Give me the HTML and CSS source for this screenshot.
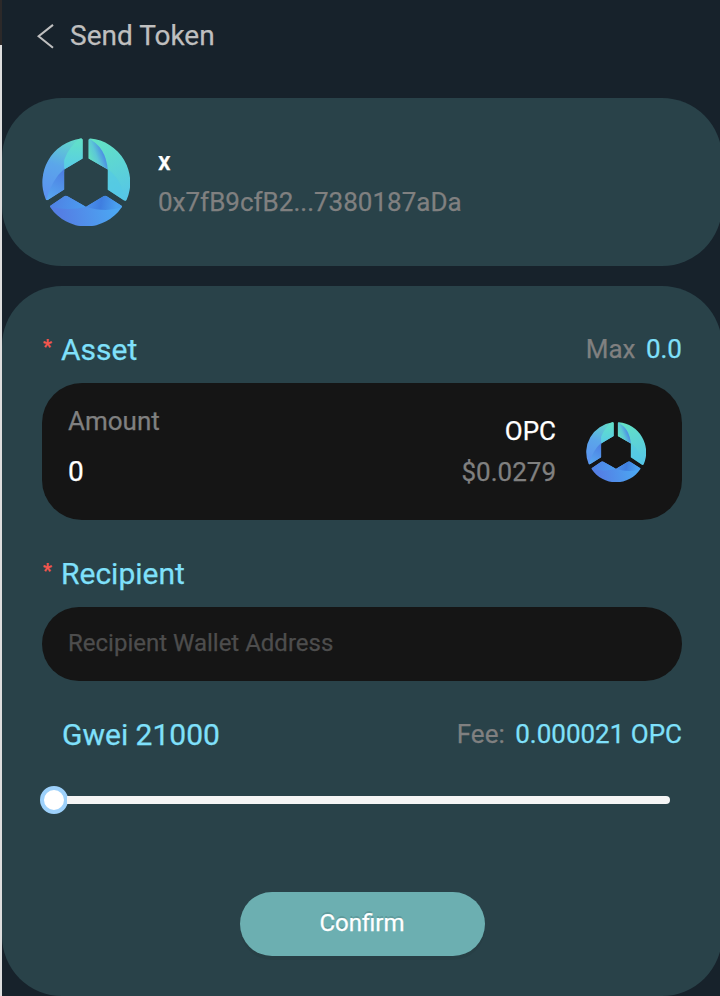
FILE: index.html
```html
<!DOCTYPE html>
<html lang="en">
<head>
<meta charset="utf-8">
<title>Send Token</title>
<link rel="stylesheet" href="styles.css">
</head>
<body>
<svg width="0" height="0" class="defs" aria-hidden="true">
  <defs>
    <linearGradient id="gl" gradientUnits="userSpaceOnUse" x1="34" y1="0" x2="12" y2="60"><stop offset="0" stop-color="#62dcc8"/><stop offset=".5" stop-color="#5ba6ea"/><stop offset="1" stop-color="#5b93f0"/></linearGradient>
    <linearGradient id="gl2" gradientUnits="userSpaceOnUse" x1="30" y1="4" x2="28" y2="36"><stop offset="0" stop-color="#61dfca"/><stop offset="1" stop-color="#56c8ec"/></linearGradient>
    <linearGradient id="gl3" gradientUnits="userSpaceOnUse" x1="22" y1="34" x2="8" y2="60"><stop offset="0" stop-color="#4d7fe2"/><stop offset="1" stop-color="#57a6f0"/></linearGradient>
    <linearGradient id="gr" gradientUnits="userSpaceOnUse" x1="56" y1="0" x2="80" y2="60"><stop offset="0" stop-color="#63e2c4"/><stop offset="1" stop-color="#56c6e6"/></linearGradient>
    <linearGradient id="gr2" gradientUnits="userSpaceOnUse" x1="46" y1="20" x2="62" y2="14"><stop offset="0" stop-color="#64e3c0"/><stop offset=".5" stop-color="#5cc8d6"/><stop offset="1" stop-color="#4a86e6"/></linearGradient>
    <linearGradient id="gb" gradientUnits="userSpaceOnUse" x1="20" y1="78" x2="72" y2="68"><stop offset="0" stop-color="#547fe4"/><stop offset="1" stop-color="#4ca6f2"/></linearGradient>
    <linearGradient id="gb2" gradientUnits="userSpaceOnUse" x1="46" y1="66" x2="74" y2="70"><stop offset="0" stop-color="#4a8eea"/><stop offset=".45" stop-color="#3f7ee0"/><stop offset="1" stop-color="#4aa0ee"/></linearGradient>
    <linearGradient id="gb3" gradientUnits="userSpaceOnUse" x1="12" y1="64" x2="44" y2="70"><stop offset="0" stop-color="#4f83e4"/><stop offset="1" stop-color="#4b9df0"/></linearGradient>
    <clipPath id="cl"><path d="M39 .5Q40.700 .3 40.700 2V20.300L22.300 31.300V51.300L6 61.700Q4.700 62.500 4 61A44 44 0 0 1 39 .5Z"/></clipPath>
    <clipPath id="cr"><path d="M46.700 2Q46.700 .3 48.400 .4A44 44 0 0 1 84.500 61.500Q83.600 63.200 82 62.200L65.700 51.500V31.300L46.700 20.300Z"/></clipPath>
    <clipPath id="cb"><path d="M8.700 69Q7.700 67.900 9 67L22.500 58Q24 57 25.600 58L44 68.300L61.500 58Q63 57 64.600 58L79 67Q80.400 67.900 79.400 69A42.500 42.500 0 0 1 8.700 69Z"/></clipPath>
    <symbol id="logo" viewBox="0.300 0 87.500 87.500">
      <g clip-path="url(#cl)"><path fill="url(#gl)" d="M-2 0H42V70H-2Z"/><path fill="url(#gl2)" d="M42 0H38Q27 9 22.300 22V34L42 22Z"/><path fill="url(#gl3)" d="M23 30Q9 42 4 64L24 54Z"/></g>
      <g clip-path="url(#cr)"><path fill="url(#gr)" d="M46 0H88V66H46Z"/><path fill="url(#gr2)" d="M46 0Q64 9 65.700 32L46 21Z"/><path fill="#54c8e6" opacity=".6" d="M65.700 31Q81 42 82 64L65 53Z"/></g>
      <g clip-path="url(#cb)"><path fill="url(#gb)" d="M4 54H84V88H4Z"/><path fill="url(#gb3)" d="M8 67L24 55L44 68.300Q26 73 8 68Z"/><path fill="url(#gb2)" d="M44 68.300L63 55L82 68Q65 75 44 68.300Z"/></g>
    </symbol>
  </defs>
</svg>
<main class="screen">
  <header class="topbar">
    <svg class="back" viewBox="0 0 16 24"><path d="M15.200 .8L1.400 11.800L15.200 22.800"/></svg>
    <h1>Send Token</h1>
  </header>
  <section class="card account">
    <svg class="avatar"><use href="#logo"/></svg>
    <div class="identity">
      <div class="name">x</div>
      <div class="address">0x7fB9cfB2...7380187aDa</div>
    </div>
  </section>
  <section class="card form">
    <div class="row">
      <div class="label"><span class="star">*</span>Asset</div>
      <div class="side">Max <b>0.0</b></div>
    </div>
    <div class="asset">
      <div class="amount"><span class="hint">Amount</span><span class="value">0</span></div>
      <div class="price"><span>OPC</span><span class="usd">$0.0279</span></div>
      <svg class="coin"><use href="#logo"/></svg>
    </div>
    <div class="row recipient-row">
      <div class="label"><span class="star">*</span>Recipient</div>
    </div>
    <div class="recipient">Recipient Wallet Address</div>
    <div class="row gas-row">
      <div class="label gas">Gwei 21000</div>
      <div class="side">Fee: <b>0.000021 OPC</b></div>
    </div>
    <div class="slider"><div class="handle"></div><div class="rail"></div></div>
    <button class="confirm">Confirm</button>
  </section>
</main>
</body>
</html>
```
FILE: styles.css
```css
* { box-sizing: border-box; }
body {
  margin: 0;
  height: 996px;
  overflow: hidden;
  background: linear-gradient(#2c2929 0 45px, #dedede 45px) 0 0 / 2px 100% no-repeat, #17222b;
  font-family: Roboto, sans-serif;
  font-size: 26px;
  color: #fff;
  -webkit-text-stroke: .25px currentColor;
}
.defs { display: block; height: 0; }
.screen { margin-left: 2px; width: 720px; }
.topbar { height: 98px; padding: 16px 0 0 35px; display: flex; align-items: flex-start; color: #bfbfbf; }
.back { width: 17px; height: 25px; margin: 8px 16px 0 0; fill: none; stroke: #bfbfbf; stroke-width: 2; }
h1 { margin: 0; font-size: 28px; font-weight: 400; line-height: 40px; }
.card { background: #294249; border-radius: 60px; }
.account { height: 168px; padding: 40px; display: flex; }
.avatar { width: 88px; height: 88px; margin-right: 28px; }
.identity { padding-top: 4px; line-height: 40px; }
.name { font-weight: 500; font-size: 25px; }
.address { color: #808080; }
.form { margin-top: 20px; height: 710px; padding: 44px 40px 0; }
.row { display: flex; justify-content: space-between; height: 40px; line-height: 40px; }
.label { display: flex; color: #7fe0fb; font-size: 30px; }
.label.gas { padding-left: 20px; }
.star { width: 19px; padding-left: 1px; color: #f5564e; font-size: 20px; font-weight: 500; line-height: 34px; }
.side { color: #808080; line-height: 38px; }
.side b { margin-left: 4px; font-weight: 400; color: #7fe0fb; }
.asset { height: 137px; margin-top: 13px; padding: 0 36px 0 26px; border-radius: 40px; background: #151515; display: flex; align-items: center; }
.amount { flex: 1; display: flex; flex-direction: column; line-height: 50px; margin-top: -11px; }
.hint, .usd { color: #808080; }
.value { font-size: 28px; height: 50px; line-height: 52px; }
.price { display: flex; flex-direction: column; align-items: flex-end; line-height: 41px; margin-right: 30px; }
.coin { width: 60px; height: 60px; }
.recipient-row { margin-top: 34px; }
.recipient { height: 74px; margin-top: 13px; padding: 0 26px; border-radius: 37px; background: #151515; color: #4d4d4d; font-size: 24px; line-height: 72px; }
.gas-row { margin-top: 34px; }
.slider { display: flex; align-items: center; height: 28px; margin: 31px 12px 0 -2px; }
.handle { width: 28px; height: 28px; border: 4px solid #9dd1fb; border-radius: 50%; background: #fff; }
.rail { flex: 1; height: 8px; margin-left: -1px; border-radius: 0 4px 4px 0; background: #f5f5f5; }
.confirm { display: block; width: 245px; height: 64px; margin: 78px 0 0 198px; padding: 0 1px 2px 0; border: 0; border-radius: 32px; background: #6cafb1; color: #fff; font: 400 24px/62px Roboto, sans-serif; text-shadow: 0 -2px 0 rgba(0, 0, 0, .12); box-shadow: 0 4px 0 rgba(0, 0, 0, .045); }
```
